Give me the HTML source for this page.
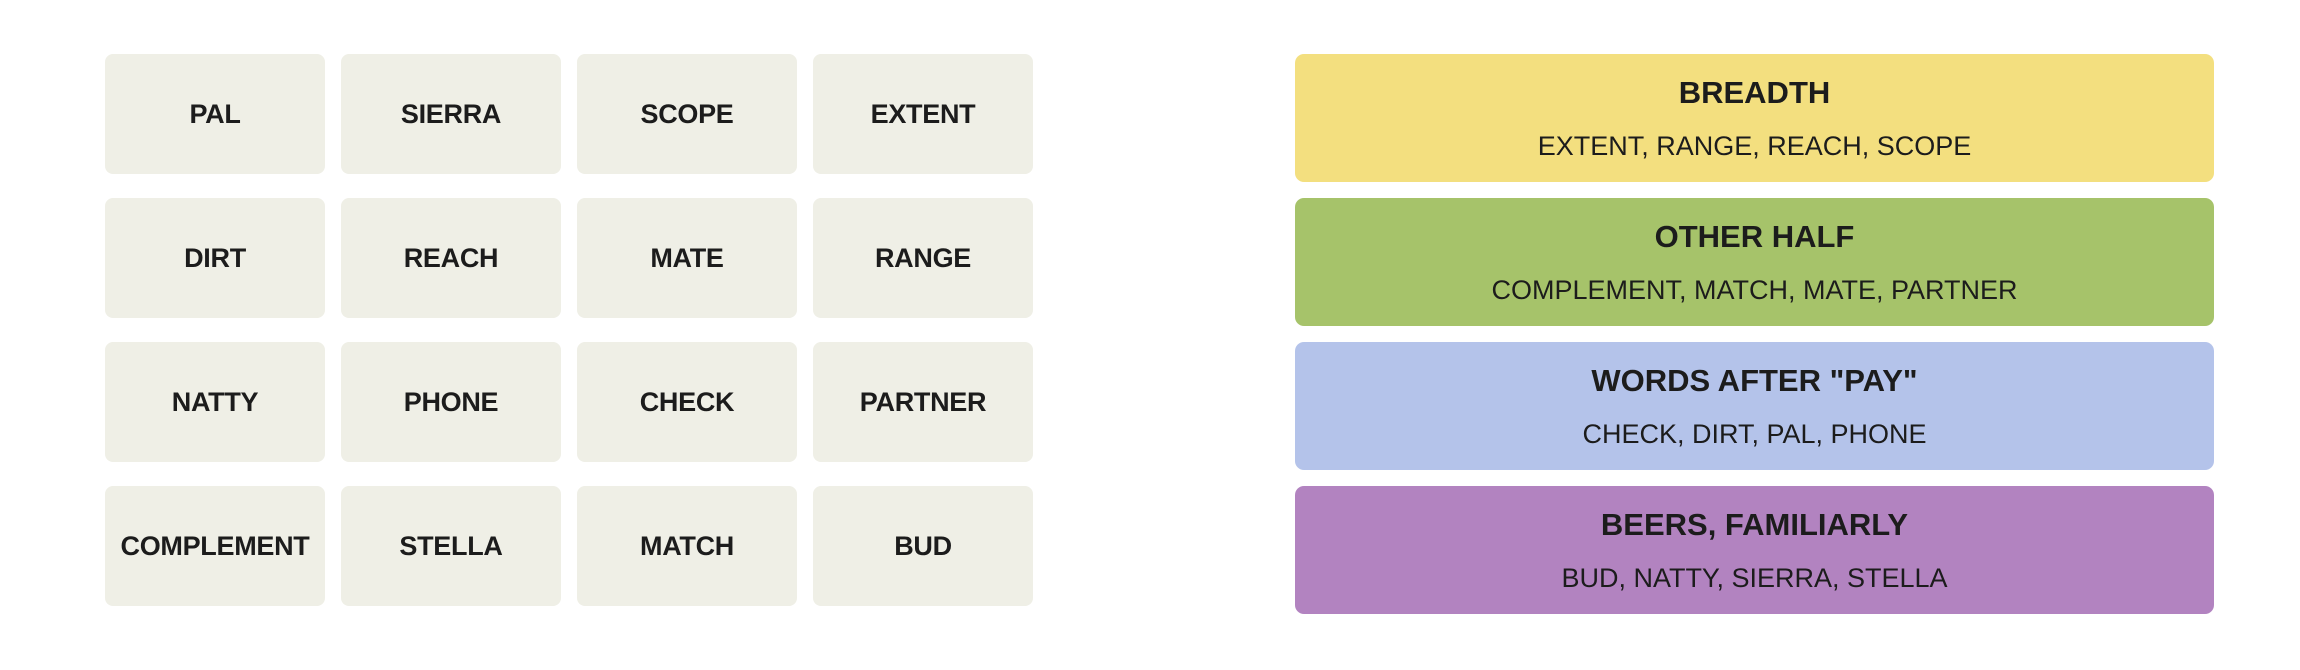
<!DOCTYPE html>
<html><head><meta charset="utf-8"><style>
html,body{margin:0;padding:0;background:#fff;width:2300px;height:670px;overflow:hidden;font-family:"Liberation Sans",Arial,sans-serif;color:#1c1c1c}
.t{position:absolute;width:220px;height:120px;background:#efefe6;border-radius:8px;display:flex;align-items:center;justify-content:center;font-weight:bold;font-size:27px;letter-spacing:-0.3px}
.c{position:absolute;left:1295px;width:919px;height:128px;border-radius:9px;text-align:center}
.c .h{position:absolute;left:0;right:0;top:22px;font-weight:bold;font-size:31px;line-height:34px}
.c .s{position:absolute;left:0;right:0;top:76px;font-size:27px;line-height:32px}
</style></head><body>
<div class="t" style="left:105px;top:54px">PAL</div>
<div class="t" style="left:341px;top:54px">SIERRA</div>
<div class="t" style="left:577px;top:54px">SCOPE</div>
<div class="t" style="left:813px;top:54px">EXTENT</div>
<div class="t" style="left:105px;top:198px">DIRT</div>
<div class="t" style="left:341px;top:198px">REACH</div>
<div class="t" style="left:577px;top:198px">MATE</div>
<div class="t" style="left:813px;top:198px">RANGE</div>
<div class="t" style="left:105px;top:342px">NATTY</div>
<div class="t" style="left:341px;top:342px">PHONE</div>
<div class="t" style="left:577px;top:342px">CHECK</div>
<div class="t" style="left:813px;top:342px">PARTNER</div>
<div class="t" style="left:105px;top:486px">COMPLEMENT</div>
<div class="t" style="left:341px;top:486px">STELLA</div>
<div class="t" style="left:577px;top:486px">MATCH</div>
<div class="t" style="left:813px;top:486px">BUD</div>

<div class="c" style="top:54px;background:#f3df7f"><div class="h">BREADTH</div><div class="s">EXTENT, RANGE, REACH, SCOPE</div></div>
<div class="c" style="top:198px;background:#a6c36a"><div class="h">OTHER HALF</div><div class="s">COMPLEMENT, MATCH, MATE, PARTNER</div></div>
<div class="c" style="top:342px;background:#b4c3ea"><div class="h">WORDS AFTER "PAY"</div><div class="s">CHECK, DIRT, PAL, PHONE</div></div>
<div class="c" style="top:486px;background:#b283c0"><div class="h">BEERS, FAMILIARLY</div><div class="s">BUD, NATTY, SIERRA, STELLA</div></div>
</body></html>
